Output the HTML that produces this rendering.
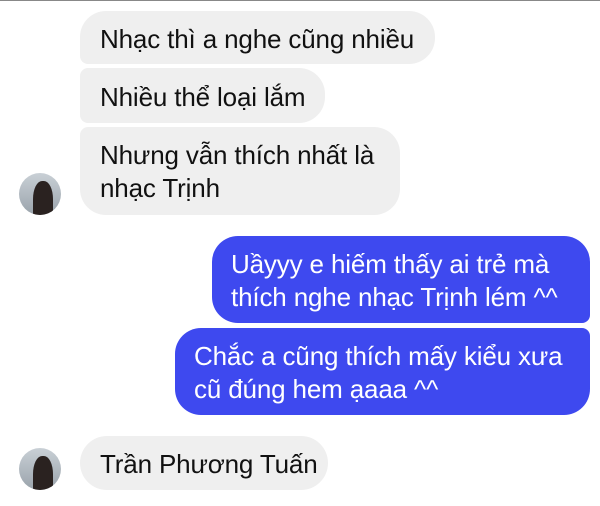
<!DOCTYPE html>
<html><head><meta charset="utf-8"><style>
body{margin:0;width:600px;height:506px;background:#fff;position:relative;overflow:hidden;font-family:"Liberation Sans",Arial,sans-serif;font-size:26px;}
.b{position:absolute;box-sizing:border-box;line-height:33px;white-space:nowrap;letter-spacing:-0.15px;}
.g{background:#efefef;color:#111;}
.u{background:#3e49ef;color:#fff;}
.av{position:absolute;width:42px;height:42px;border-radius:50%;overflow:hidden;background:linear-gradient(#c9d0d6,#9aa3ab);}
.av:after{content:"";position:absolute;left:14px;top:8px;width:20px;height:40px;border-radius:45% 45% 10% 10%;background:#2a2220;}
</style></head><body>
<div style="position:absolute;left:0;top:0;width:600px;height:1px;background:#888"></div>
<div class="b g" style="left:80px;top:11px;width:355px;height:53px;border-radius:26px 26px 26px 8px;padding:12px 0 0 20px">Nhạc thì a nghe cũng nhiều</div>
<div class="b g" style="left:80px;top:68px;width:245px;height:55px;border-radius:8px 26px 26px 8px;padding:13px 0 0 20px">Nhiều thể loại lắm</div>
<div class="b g" style="left:80px;top:127px;width:320px;height:88px;border-radius:8px 26px 26px 26px;padding:12px 0 0 20px">Nhưng vẫn thích nhất là<br>nhạc Trịnh</div>
<div class="av" style="left:19px;top:173px"></div>
<div class="b u" style="left:212px;top:236px;width:378px;height:87px;border-radius:26px 26px 8px 26px;padding:12px 0 0 19px">Uầyyy e hiếm thấy ai trẻ mà<br>thích nghe nhạc Trịnh lém ^^</div>
<div class="b u" style="left:175px;top:328px;width:415px;height:87px;border-radius:26px 8px 26px 26px;padding:12px 0 0 19px">Chắc a cũng thích mấy kiểu xưa<br>cũ đúng hem ạaaa ^^</div>
<div class="av" style="left:19px;top:448px"></div>
<div class="b g" style="left:80px;top:436px;width:248px;height:54px;border-radius:27px;padding:12px 0 0 20px">Trần Phương Tuấn</div>
</body></html>
